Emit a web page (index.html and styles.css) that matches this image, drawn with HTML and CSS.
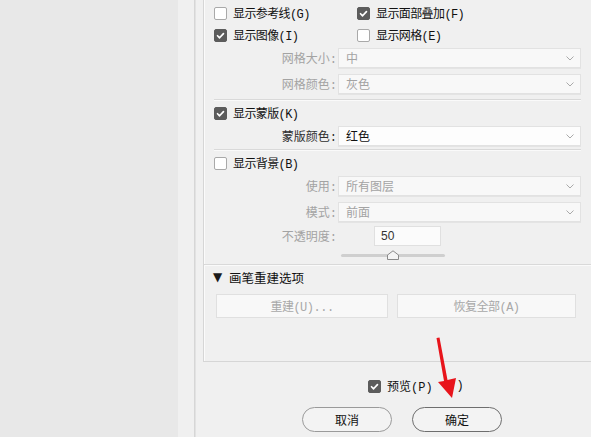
FILE: index.html
```html
<!DOCTYPE html>
<html lang="zh-CN">
<head>
<meta charset="utf-8">
<link rel="stylesheet" href="styles.css">
</head>
<body>
<div class="page">
  <div class="side"></div>
  <div class="strip"></div>
  <div class="main">
    <div class="group">
      <div class="row check-row first">
        <label class="col1"><span class="cb"></span><span class="lbl">显示参考线(G)</span></label>
        <label class="col2"><span class="cb on"><svg viewBox="0 0 13 13"><path d="M3 6.8 L5.4 9.2 L10 4.2" /></svg></span><span class="lbl">显示面部叠加(F)</span></label>
      </div>
      <div class="row check-row">
        <label class="col1"><span class="cb on"><svg viewBox="0 0 13 13"><path d="M3 6.8 L5.4 9.2 L10 4.2" /></svg></span><span class="lbl">显示图像(I)</span></label>
        <label class="col2"><span class="cb"></span><span class="lbl">显示网格(E)</span></label>
      </div>
      <div class="row field s1">
        <span class="flabel dis">网格大小:</span>
        <div class="select dis"><span>中</span><svg class="chev" viewBox="0 0 8 5"><path d="M0.5 0.5 L4 4 L7.5 0.5"/></svg></div>
      </div>
      <div class="row field s2">
        <span class="flabel dis">网格颜色:</span>
        <div class="select dis"><span>灰色</span><svg class="chev" viewBox="0 0 8 5"><path d="M0.5 0.5 L4 4 L7.5 0.5"/></svg></div>
      </div>
      <div class="sep sep1"></div>
      <div class="row check-row after-sep">
        <label class="col1"><span class="cb on"><svg viewBox="0 0 13 13"><path d="M3 6.8 L5.4 9.2 L10 4.2" /></svg></span><span class="lbl">显示蒙版(K)</span></label>
      </div>
      <div class="row field s1">
        <span class="flabel">蒙版颜色:</span>
        <div class="select"><span>红色</span><svg class="chev" viewBox="0 0 8 5"><path d="M0.5 0.5 L4 4 L7.5 0.5"/></svg></div>
      </div>
      <div class="sep sep2"></div>
      <div class="row check-row after-sep2">
        <label class="col1"><span class="cb"></span><span class="lbl">显示背景(B)</span></label>
      </div>
      <div class="row field s1">
        <span class="flabel dis">使用:</span>
        <div class="select dis"><span>所有图层</span><svg class="chev" viewBox="0 0 8 5"><path d="M0.5 0.5 L4 4 L7.5 0.5"/></svg></div>
      </div>
      <div class="row field s2">
        <span class="flabel dis">模式:</span>
        <div class="select dis"><span>前面</span><svg class="chev" viewBox="0 0 8 5"><path d="M0.5 0.5 L4 4 L7.5 0.5"/></svg></div>
      </div>
      <div class="row field s3">
        <span class="flabel dis">不透明度:</span>
        <div class="numbox">50</div>
      </div>
      <div class="slider-row">
        <div class="track"><svg class="thumb" viewBox="0 0 12 10"><path d="M0.5 9.5 L0.5 5 L6 0.8 L11.5 5 L11.5 9.5 Z"/></svg></div>
      </div>
      <div class="sep sep3"></div>
      <div class="row head-row">
        <span class="tri">▼</span><span class="head">画笔重建选项</span>
      </div>
      <div class="btn-row">
        <div class="dbtn b1">重建(U)...</div>
        <div class="dbtn b2">恢复全部(A)</div>
      </div>
    </div>
    <div class="footer">
      <div class="preview-row">
        <span class="cb on"><svg viewBox="0 0 13 13"><path d="M3 6.8 L5.4 9.2 L10 4.2" /></svg></span>
        <span class="lbl">预览(P)</span>
        <span class="lbl hidden-end">)</span>
      </div>
      <div class="actions">
        <div class="pill">取消</div>
        <div class="pill ok">确定</div>
      </div>
    </div>
  </div>
</div>
<svg class="arrow" viewBox="0 0 591 437" width="591" height="437">
  <path d="M436.5 338 L439.5 337.5 L447.5 380 L456 378 L452 398 L438 382 L444 381 Z" fill="#e8141b"/>
</svg>
</body>
</html>
```
FILE: styles.css
```css
html, body {
  margin: 0;
  padding: 0;
}
body {
  width: 591px;
  height: 437px;
  overflow: hidden;
  background: #e8e8e8;
  font-family: "Liberation Mono", "Noto Sans CJK SC", monospace;
  font-size: 12px;
  color: #1a1a1a;
  position: relative;
}
.page {
  display: flex;
  height: 437px;
}
.side {
  width: 178px;
  background: #e8e8e8;
}
.strip {
  width: 16px;
  background: #f0f0f0;
  border-right: 1px solid #d6d6d6;
}
.main {
  flex: 1;
  background: #f0f0f0;
  padding-left: 8px;
  display: flex;
  flex-direction: column;
  box-shadow: inset 4px 0 0 -3px #e2e2e2;
}
.group {
  height: 362px;
  box-sizing: border-box;
  border-left: 1px solid #d6d6d6;
  border-bottom: 1px solid #d6d6d6;
  box-shadow: inset 1px 0 0 #fbfbfb;
  padding-left: 10px;
  padding-top: 2px;
  display: flex;
  flex-direction: column;
}
.row {
  display: flex;
  align-items: center;
}
.check-row {
  height: 22px;
}
.check-row label {
  display: flex;
  align-items: center;
}
.col1 {
  width: 143px;
}
.cb {
  width: 13px;
  height: 13px;
  box-sizing: border-box;
  border: 1px solid #a9a9a9;
  border-radius: 2px;
  background: #ffffff;
  display: inline-flex;
  flex-shrink: 0;
}
.cb.on {
  background: #5c5c5c;
  border-color: #5c5c5c;
}
.cb svg {
  width: 11px;
  height: 11px;
}
.cb path {
  fill: none;
  stroke: #ffffff;
  stroke-width: 2;
  stroke-linecap: round;
  stroke-linejoin: round;
}
.lbl {
  margin-left: 6px;
  letter-spacing: -0.6px;
  color: #111;
  white-space: nowrap;
}
.field {
  height: 20px;
  margin-left: -10px;
}
.field.s1 { margin-top: 2px; }
.field.s2 { margin-top: 6px; }
.field.s3 { margin-top: 4px; }
.flabel {
  width: 133px;
  text-align: right;
  color: #2e2e2e;
  white-space: nowrap;
}
.flabel.dis {
  color: #a3a3a3;
}
.select {
  margin-left: 1px;
  width: 243px;
  height: 20px;
  box-sizing: border-box;
  border: 1px solid #e2e2e2;
  background: #fdfdfd;
  box-shadow: 0 1px 0 #e4e4e4;
  display: flex;
  align-items: center;
  padding-left: 7px;
  padding-right: 6px;
  color: #111;
}
.select.dis {
  background: #f8f8f8;
  color: #a3a3a3;
}
.select span {
  flex: 1;
}
.chev {
  width: 8px;
  height: 5px;
}
.chev path {
  fill: none;
  stroke: #a9a9a9;
  stroke-width: 1;
}
.numbox {
  margin-left: 37px;
  width: 67px;
  height: 20px;
  box-sizing: border-box;
  border: 1px solid #e0e0e0;
  background: #fbfbfb;
  padding-left: 6px;
  display: flex;
  align-items: center;
  font-family: "Liberation Sans", "Noto Sans CJK SC", sans-serif;
  font-size: 12px;
  color: #333;
}
.slider-row {
  height: 15px;
  display: flex;
  align-items: center;
  margin-top: 2px;
}
.track {
  margin-left: 127px;
  width: 104px;
  height: 3px;
  background: #cfcfcf;
  border-radius: 2px;
  display: flex;
  align-items: center;
}
.thumb {
  margin-left: 46px;
  width: 12px;
  height: 10px;
  margin-top: -1px;
}
.thumb path {
  fill: #f4f4f4;
  stroke: #8a8a8a;
  stroke-width: 1;
}
.sep {
  height: 1px;
  background: #d9d9d9;
  box-shadow: 0 1px 0 #fafafa;
}
.sep1 {
  margin-top: 5px;
  margin-right: 10px;
}
.sep2 {
  margin-top: 3px;
  margin-right: 10px;
}
.sep3 {
  margin-top: 1px;
  margin-left: -10px;
}
.after-sep {
  margin-top: 2px;
}
.after-sep2 {
  margin-top: 2px;
}
.head-row {
  height: 22px;
  margin-top: 1px;
}
.tri {
  font-family: "DejaVu Sans", sans-serif;
  font-size: 12px;
  color: #1a1a1a;
  margin-left: -1px;
  width: 16px;
}
.head {
  font-family: "Noto Sans CJK SC", sans-serif;
  font-size: 12.5px;
  color: #111;
}
.btn-row {
  display: flex;
  margin-top: 6px;
  gap: 9px;
}
.dbtn {
  height: 24px;
  box-sizing: border-box;
  border: 1px solid #e0e0e0;
  background: #f8f8f8;
  color: #a8a8a8;
  display: flex;
  align-items: center;
  justify-content: center;
  letter-spacing: -0.5px;
}
.b1 {
  margin-left: 2px;
  width: 172px;
}
.b2 {
  width: 179px;
}
.footer {
  flex: 1;
  display: flex;
  flex-direction: column;
}
.preview-row {
  display: flex;
  align-items: center;
  height: 14px;
  margin-top: 17px;
  padding-left: 165px;
}
.preview-row .lbl {
  margin-left: 6px;
  letter-spacing: 0;
}
.hidden-end {
  margin-left: 24px !important;
}
.actions {
  display: flex;
  gap: 20px;
  margin-top: 14px;
  padding-left: 99px;
}
.pill {
  width: 90px;
  height: 25px;
  box-sizing: border-box;
  border: 1px solid #9a9a9a;
  border-radius: 13px;
  background: #f3f3f3;
  display: flex;
  align-items: center;
  justify-content: center;
  font-family: "Noto Sans CJK SC", sans-serif;
  font-size: 12px;
  color: #111;
}
.pill.ok {
  border-color: #6e6e6e;
}
.arrow {
  position: absolute;
  left: 0;
  top: 0;
  pointer-events: none;
}
```
